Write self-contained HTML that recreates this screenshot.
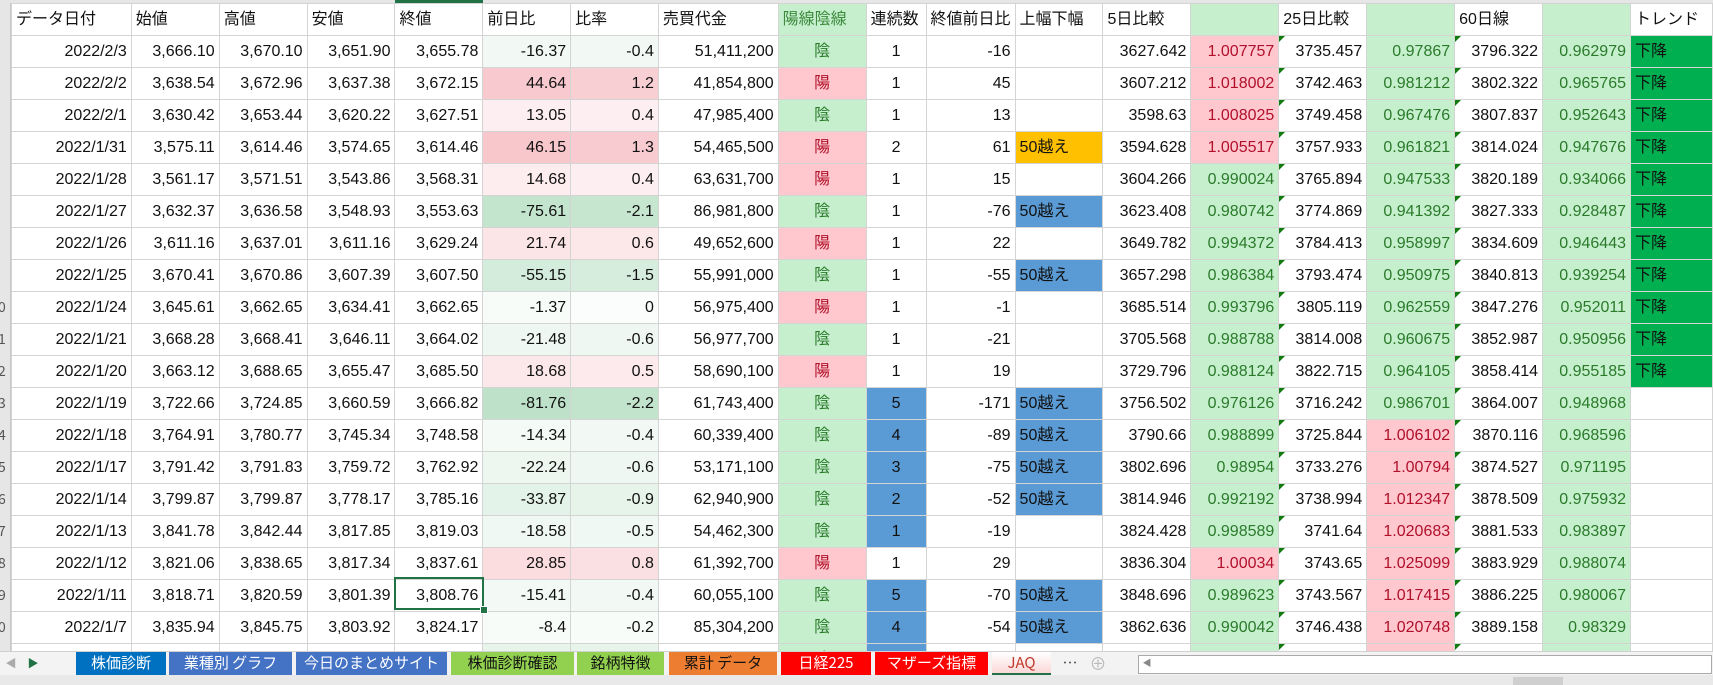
<!DOCTYPE html>
<html><head><meta charset="utf-8">
<style>
html,body{margin:0;padding:0;}
body{width:1713px;height:685px;overflow:hidden;background:#fff;position:relative;font-family:"Liberation Sans","Noto Sans CJK JP",sans-serif;}
#top{position:absolute;left:0;top:0;width:1713px;height:3px;background:#e6e6e6;}
#rh{position:absolute;left:0;top:3px;width:11px;height:660px;background:#e6e6e6;border-right:1px solid #c8c8c8;box-sizing:border-box;overflow:hidden;}
#rh div{position:absolute;left:-2px;width:12px;height:32px;line-height:32px;font-size:14px;color:#555;font-family:"Noto Sans CJK JP",sans-serif;}
table{position:absolute;left:11px;top:3px;border-collapse:collapse;table-layout:fixed;font-family:"Liberation Sans","Noto Sans CJK JP",sans-serif;font-size:16px;color:#111;}
td{height:31px;padding:0 4px;border:1px solid #d4d4d4;text-align:right;white-space:nowrap;overflow:hidden;line-height:31px;position:relative;}
tr.h td{text-align:left;padding-left:4px;}
.c{text-align:center}.l{text-align:left}
.gn{background:#c6efce;color:#2a7a2a}
.pk{background:#ffc7ce;color:#b0102a}
.gh{background:#c6efce;color:#3c8a3c}
.bl{background:#5b9bd5}
.or{background:#ffc000}
.tr{background:#00b050;text-align:left}
.t::before{content:"";position:absolute;left:0;top:0;border-top:6px solid #107c10;border-right:6px solid transparent;}
#sel{position:absolute;left:394px;top:577px;width:90px;height:33px;border:2px solid #217346;box-sizing:border-box;}
#selh{position:absolute;left:480px;top:606px;width:6px;height:6px;background:#217346;border:1px solid #fff;}
#eline{position:absolute;left:395px;top:0;width:88px;height:3px;background:#217346;}
#tabs{position:absolute;left:0;top:651px;width:1713px;height:24px;background:#f3f3f3;border-top:1px solid #d0d0d0;font-family:"Noto Sans CJK JP",sans-serif;font-size:15px;}
.tab{position:absolute;top:0;height:23px;line-height:22px;text-align:center;color:#fff;white-space:nowrap;overflow:hidden;}
#bot{position:absolute;left:0;top:675px;width:1713px;height:10px;background:#e9e9e9;}
</style></head><body>
<div id="top"></div><div id="eline"></div>
<div id="rh">
<div style="top:288px">0</div><div style="top:320px">1</div><div style="top:352px">2</div><div style="top:384px">3</div><div style="top:416px">4</div><div style="top:448px">5</div><div style="top:480px">6</div><div style="top:512px">7</div><div style="top:544px">8</div><div style="top:576px">9</div><div style="top:608px">0</div>
</div>
<table>
<colgroup><col style="width:120px"><col style="width:88px"><col style="width:88px"><col style="width:88px"><col style="width:88px"><col style="width:88px"><col style="width:88px"><col style="width:120px"><col style="width:88px"><col style="width:60px"><col style="width:88px"><col style="width:88px"><col style="width:88px"><col style="width:88px"><col style="width:88px"><col style="width:88px"><col style="width:88px"><col style="width:88px"><col style="width:82px"></colgroup>
<tr class="h"><td>データ日付</td><td>始値</td><td>高値</td><td>安値</td><td>終値</td><td>前日比</td><td>比率</td><td>売買代金</td><td class="gh">陽線陰線</td><td>連続数</td><td>終値前日比</td><td>上幅下幅</td><td>5日比較</td><td class="gh"></td><td>25日比較</td><td class="gh"></td><td>60日線</td><td class="gh"></td><td>トレンド</td></tr>
<tr><td>2022/2/3</td><td>3,666.10</td><td>3,670.10</td><td>3,651.90</td><td>3,655.78</td><td style="background:#f2f9f4">-16.37</td><td style="background:#f2f9f4">-0.4</td><td>51,411,200</td><td class="c gn">陰</td><td class="c">1</td><td>-16</td><td class="l"></td><td>3627.642</td><td class="pk">1.007757</td><td class="t">3735.457</td><td class="gn">0.97867</td><td class="t">3796.322</td><td class="gn">0.962979</td><td class="tr">下降</td></tr>
<tr><td>2022/2/2</td><td>3,638.54</td><td>3,672.96</td><td>3,637.38</td><td>3,672.15</td><td style="background:#f8c9ce">44.64</td><td style="background:#f8d0d4">1.2</td><td>41,854,800</td><td class="c pk">陽</td><td class="c">1</td><td>45</td><td class="l"></td><td>3607.212</td><td class="pk">1.018002</td><td class="t">3742.463</td><td class="gn">0.981212</td><td class="t">3802.322</td><td class="gn">0.965765</td><td class="tr">下降</td></tr>
<tr><td>2022/2/1</td><td>3,630.42</td><td>3,653.44</td><td>3,620.22</td><td>3,627.51</td><td style="background:#fdeff1">13.05</td><td style="background:#fdeff1">0.4</td><td>47,985,400</td><td class="c gn">陰</td><td class="c">1</td><td>13</td><td class="l"></td><td>3598.63</td><td class="pk">1.008025</td><td class="t">3749.458</td><td class="gn">0.967476</td><td class="t">3807.837</td><td class="gn">0.952643</td><td class="tr">下降</td></tr>
<tr><td>2022/1/31</td><td>3,575.11</td><td>3,614.46</td><td>3,574.65</td><td>3,614.46</td><td style="background:#f8c7cc">46.15</td><td style="background:#f8cbd0">1.3</td><td>54,465,500</td><td class="c pk">陽</td><td class="c">2</td><td>61</td><td class="l or">50越え</td><td>3594.628</td><td class="pk">1.005517</td><td class="t">3757.933</td><td class="gn">0.961821</td><td class="t">3814.024</td><td class="gn">0.947676</td><td class="tr">下降</td></tr>
<tr><td>2022/1/28</td><td>3,561.17</td><td>3,571.51</td><td>3,543.86</td><td>3,568.31</td><td style="background:#fdedef">14.68</td><td style="background:#fdeff1">0.4</td><td>63,631,700</td><td class="c pk">陽</td><td class="c">1</td><td>15</td><td class="l"></td><td>3604.266</td><td class="gn">0.990024</td><td class="t">3765.894</td><td class="gn">0.947533</td><td class="t">3820.189</td><td class="gn">0.934066</td><td class="tr">下降</td></tr>
<tr><td>2022/1/27</td><td>3,632.37</td><td>3,636.58</td><td>3,548.93</td><td>3,553.63</td><td style="background:#c3e4cd">-75.61</td><td style="background:#c6e6cf">-2.1</td><td>86,981,800</td><td class="c gn">陰</td><td class="c">1</td><td>-76</td><td class="l bl">50越え</td><td>3623.408</td><td class="gn">0.980742</td><td class="t">3774.869</td><td class="gn">0.941392</td><td class="t">3827.333</td><td class="gn">0.928487</td><td class="tr">下降</td></tr>
<tr><td>2022/1/26</td><td>3,611.16</td><td>3,637.01</td><td>3,611.16</td><td>3,629.24</td><td style="background:#fce5e7">21.74</td><td style="background:#fce7e9">0.6</td><td>49,652,600</td><td class="c pk">陽</td><td class="c">1</td><td>22</td><td class="l"></td><td>3649.782</td><td class="gn">0.994372</td><td class="t">3784.413</td><td class="gn">0.958997</td><td class="t">3834.609</td><td class="gn">0.946443</td><td class="tr">下降</td></tr>
<tr><td>2022/1/25</td><td>3,670.41</td><td>3,670.86</td><td>3,607.39</td><td>3,607.50</td><td style="background:#d3ecdb">-55.15</td><td style="background:#d6eddd">-1.5</td><td>55,991,000</td><td class="c gn">陰</td><td class="c">1</td><td>-55</td><td class="l bl">50越え</td><td>3657.298</td><td class="gn">0.986384</td><td class="t">3793.474</td><td class="gn">0.950975</td><td class="t">3840.813</td><td class="gn">0.939254</td><td class="tr">下降</td></tr>
<tr><td>2022/1/24</td><td>3,645.61</td><td>3,662.65</td><td>3,634.41</td><td>3,662.65</td><td style="background:#f8fcf9">-1.37</td><td style="background:#fbfdfc">0</td><td>56,975,400</td><td class="c pk">陽</td><td class="c">1</td><td>-1</td><td class="l"></td><td>3685.514</td><td class="gn">0.993796</td><td class="t">3805.119</td><td class="gn">0.962559</td><td class="t">3847.276</td><td class="gn">0.952011</td><td class="tr">下降</td></tr>
<tr><td>2022/1/21</td><td>3,668.28</td><td>3,668.41</td><td>3,646.11</td><td>3,664.02</td><td style="background:#eef7f1">-21.48</td><td style="background:#eff7f2">-0.6</td><td>56,977,700</td><td class="c gn">陰</td><td class="c">1</td><td>-21</td><td class="l"></td><td>3705.568</td><td class="gn">0.988788</td><td class="t">3814.008</td><td class="gn">0.960675</td><td class="t">3852.987</td><td class="gn">0.950956</td><td class="tr">下降</td></tr>
<tr><td>2022/1/20</td><td>3,663.12</td><td>3,688.65</td><td>3,655.47</td><td>3,685.50</td><td style="background:#fce8ea">18.68</td><td style="background:#fceaec">0.5</td><td>58,690,100</td><td class="c pk">陽</td><td class="c">1</td><td>19</td><td class="l"></td><td>3729.796</td><td class="gn">0.988124</td><td class="t">3822.715</td><td class="gn">0.964105</td><td class="t">3858.414</td><td class="gn">0.955185</td><td class="tr">下降</td></tr>
<tr><td>2022/1/19</td><td>3,722.66</td><td>3,724.85</td><td>3,660.59</td><td>3,666.82</td><td style="background:#bee2c9">-81.76</td><td style="background:#c2e4cc">-2.2</td><td>61,743,400</td><td class="c gn">陰</td><td class="c bl">5</td><td>-171</td><td class="l bl">50越え</td><td>3756.502</td><td class="gn">0.976126</td><td class="t">3716.242</td><td class="gn">0.986701</td><td class="t">3864.007</td><td class="gn">0.948968</td><td></td></tr>
<tr><td>2022/1/18</td><td>3,764.91</td><td>3,780.77</td><td>3,745.34</td><td>3,748.58</td><td style="background:#f4faf6">-14.34</td><td style="background:#f2f9f4">-0.4</td><td>60,339,400</td><td class="c gn">陰</td><td class="c bl">4</td><td>-89</td><td class="l bl">50越え</td><td>3790.66</td><td class="gn">0.988899</td><td class="t">3725.844</td><td class="pk">1.006102</td><td class="t">3870.116</td><td class="gn">0.968596</td><td></td></tr>
<tr><td>2022/1/17</td><td>3,791.42</td><td>3,791.83</td><td>3,759.72</td><td>3,762.92</td><td style="background:#edf7f0">-22.24</td><td style="background:#eff7f2">-0.6</td><td>53,171,100</td><td class="c gn">陰</td><td class="c bl">3</td><td>-75</td><td class="l bl">50越え</td><td>3802.696</td><td class="gn">0.98954</td><td class="t">3733.276</td><td class="pk">1.00794</td><td class="t">3874.527</td><td class="gn">0.971195</td><td></td></tr>
<tr><td>2022/1/14</td><td>3,799.87</td><td>3,799.87</td><td>3,778.17</td><td>3,785.16</td><td style="background:#e4f3e9">-33.87</td><td style="background:#e6f4ea">-0.9</td><td>62,940,900</td><td class="c gn">陰</td><td class="c bl">2</td><td>-52</td><td class="l bl">50越え</td><td>3814.946</td><td class="gn">0.992192</td><td class="t">3738.994</td><td class="pk">1.012347</td><td class="t">3878.509</td><td class="gn">0.975932</td><td></td></tr>
<tr><td>2022/1/13</td><td>3,841.78</td><td>3,842.44</td><td>3,817.85</td><td>3,819.03</td><td style="background:#f0f8f3">-18.58</td><td style="background:#f0f8f3">-0.5</td><td>54,462,300</td><td class="c gn">陰</td><td class="c bl">1</td><td>-19</td><td class="l"></td><td>3824.428</td><td class="gn">0.998589</td><td class="t">3741.64</td><td class="pk">1.020683</td><td class="t">3881.533</td><td class="gn">0.983897</td><td></td></tr>
<tr><td>2022/1/12</td><td>3,821.06</td><td>3,838.65</td><td>3,817.34</td><td>3,837.61</td><td style="background:#fbdcdf">28.85</td><td style="background:#fbe0e3">0.8</td><td>61,392,700</td><td class="c pk">陽</td><td class="c">1</td><td>29</td><td class="l"></td><td>3836.304</td><td class="pk">1.00034</td><td class="t">3743.65</td><td class="pk">1.025099</td><td class="t">3883.929</td><td class="gn">0.988074</td><td></td></tr>
<tr><td>2022/1/11</td><td>3,818.71</td><td>3,820.59</td><td>3,801.39</td><td>3,808.76</td><td style="background:#f3f9f5">-15.41</td><td style="background:#f2f9f4">-0.4</td><td>60,055,100</td><td class="c gn">陰</td><td class="c bl">5</td><td>-70</td><td class="l bl">50越え</td><td>3848.696</td><td class="gn">0.989623</td><td class="t">3743.567</td><td class="pk">1.017415</td><td class="t">3886.225</td><td class="gn">0.980067</td><td></td></tr>
<tr><td>2022/1/7</td><td>3,835.94</td><td>3,845.75</td><td>3,803.92</td><td>3,824.17</td><td style="background:#f8fcf9">-8.4</td><td style="background:#f8fcf9">-0.2</td><td>85,304,200</td><td class="c gn">陰</td><td class="c bl">4</td><td>-54</td><td class="l bl">50越え</td><td>3862.636</td><td class="gn">0.990042</td><td class="t">3746.438</td><td class="pk">1.020748</td><td class="t">3889.158</td><td class="gn">0.98329</td><td></td></tr>
<tr><td></td><td></td><td></td><td></td><td></td><td style="background:#e6f4ea"></td><td style="background:#e6f4ea"></td><td></td><td class="c gn">陰</td><td class="c bl"></td><td></td><td class="l"></td><td></td><td class="gn"></td><td class="t"></td><td class="pk"></td><td class="t"></td><td class="gn"></td><td></td></tr>
</table>
<div id="sel"></div><div id="selh"></div>
<div id="tabs">
<div class="tab" style="left:4px;width:14px;color:#aaa;font-size:11px">◀</div>
<div class="tab" style="left:26px;width:14px;color:#217346;font-size:11px">▶</div>
<div class="tab" style="left:76px;width:90px;background:#0070c0">株価診断</div>
<div class="tab" style="left:169px;width:123px;background:#4472c4">業種別 グラフ</div>
<div class="tab" style="left:296px;width:151px;background:#4472c4">今日のまとめサイト</div>
<div class="tab" style="left:451px;width:123px;background:#92d050;color:#111">株価診断確認</div>
<div class="tab" style="left:577px;width:87px;background:#92d050;color:#111">銘柄特徴</div>
<div class="tab" style="left:669px;width:108px;background:#ed7d31;color:#111">累計 データ</div>
<div class="tab" style="left:781px;width:90px;background:#ff0000">日経225</div>
<div class="tab" style="left:875px;width:113px;background:#ff0000">マザーズ指標</div>
<div class="tab" style="left:992px;width:59px;background:linear-gradient(#fff,#fbd8d8);color:#c0392b;border-bottom:2px solid #217346;height:21px">JAQ</div>
<div class="tab" style="left:1060px;width:20px;color:#555">…</div>
<div class="tab" style="left:1088px;width:20px;color:#bbb;font-size:17px">⊕</div>
<div style="position:absolute;left:1138px;top:3px;width:572px;height:17px;border:1px solid #aaa;background:#fff"></div>
<div class="tab" style="left:1140px;width:14px;color:#888;font-size:9px">◀</div>
</div>
<div id="bot"><div style="position:absolute;left:1513px;top:2px;width:50px;height:8px;background:#cfcfcf"></div></div>
</body></html>
